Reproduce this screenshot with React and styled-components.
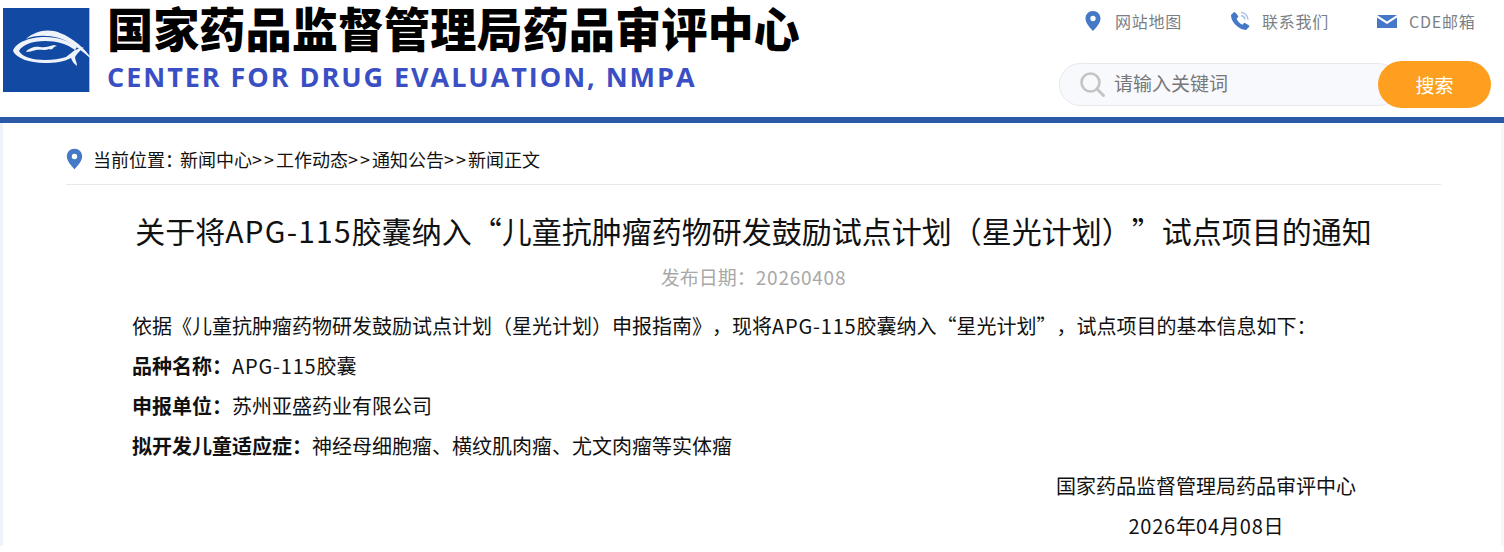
import React from "react";
import styled, { createGlobalStyle } from "styled-components";

const Global = createGlobalStyle`
  html, body { margin: 0; padding: 0; background: #fff; }
  body { font-family: "Noto Sans CJK SC", "Liberation Sans", sans-serif; color: #111; overflow: hidden; text-spacing-trim: space-all; font-kerning: none; }
  * { box-sizing: border-box; }
`;

const Page = styled.div`width: 1504px; height: 552px; overflow: hidden; background: #fff;`;

const Header = styled.header`
  height: 123px;
  border-bottom: 6px solid #2b59a5;
  padding: 8px 13px 0 3px;
  display: flex;
  justify-content: space-between;
`;
const Brand = styled.div`display: flex; gap: 14px; align-items: flex-start;`;
const BrandText = styled.div`display: flex; flex-direction: column; margin-top: -4px;`;
const BrandCn = styled.div`
  font-size: 46.2px; font-weight: 900; line-height: 46px; color: #000; white-space: nowrap;
`;
const BrandEn = styled.div`
  margin-top: 11px; font-family: "Open Sans", sans-serif; font-size: 27px; font-weight: 700; line-height: 32px;
  letter-spacing: 1.95px; color: #3a4fc4; white-space: nowrap;
`;

const Tools = styled.div`width: 432px; display: flex; flex-direction: column;`;
const NavRow = styled.nav`
  display: flex; gap: 48px; padding: 1px 0 0 24px; height: 53px; align-items: flex-start;
`;
const NavItem = styled.a`
  display: flex; align-items: center; gap: 12px; height: 24px; font-size: 16px; letter-spacing: 0.75px;
  color: #7a7f86; white-space: nowrap;
`;
const NavIcon = styled.svg`width: 20px; height: 20px; flex: none; margin-top: 0;`;

const Search = styled.form`display: flex; align-items: center; height: 47px; margin: 0;`;
const SearchField = styled.div`
  flex: 1; height: 43px; margin-right: -22px; border: 1px solid #e6e8ec; border-radius: 22px;
  background: #f8f9fc; display: flex; align-items: center; gap: 8px; padding: 0 0 4px 19px;
  font-size: 19px; color: #777; white-space: nowrap;
`;
const SearchBtn = styled.button`
  position: relative; width: 113px; height: 47px; border: 0; border-radius: 24px; background: #ff9f1f;
  color: #fff; font: 400 19px "Noto Sans CJK SC", sans-serif; padding-top: 0;
`;

const Main = styled.main`
  margin: 0 3px; padding: 0 60px 0 63px;
  box-shadow: -3px 0 0 #eef3fb, 3px 0 0 #f4f7fc;
`;
const Crumbs = styled.div`
  height: 62px; border-bottom: 1px solid #e8e8e8; display: flex; align-items: flex-start; gap: 10px;
  padding-top: 21px; font-size: 18px; line-height: 30px; color: #111; white-space: nowrap;
`;
const PinIcon = styled.svg`width: 17px; height: 22px; flex: none; margin-top: 4px;`;
const Arrows = styled.span`letter-spacing: 2px;`;
const Colon = styled.span`letter-spacing: -3px;`;

const Title = styled.h1`
  margin: 23px 0 0; font-size: 30px; font-weight: 400; line-height: 44px; text-align: center; white-space: nowrap;
  color: #111;
`;
const DateLine = styled.div`
  margin-top: 10px; font-size: 19px; line-height: 30px; text-align: center; color: #a8a8a8;
`;
const Latin = styled.span`letter-spacing: 0.04em;`;
const Body = styled.section`padding: 14px 0 0 66px; font-size: 20px; line-height: 40px; color: #111;`;
const Para = styled.p`margin: 0; white-space: nowrap;`;
const Strong = styled.b`font-weight: 700;`;
const Sign = styled.div`width: 300px; margin: 0 85px 0 auto; text-align: center; white-space: nowrap;`;

const Pin = ({ as: C = "svg", ...p }) => (
  <C viewBox="0 0 20 24" {...p}>
    <path d="M10 0C4.7 0 1 4 1 9c0 5.600 5.600 11.300 9 15 3.400-3.700 9-9.400 9-15 0-5-3.700-9-9-9z" fill="#4678c8" />
    <circle cx="10" cy="9" r="3.200" fill="#fff" />
  </C>
);

const Logo = () => (
  <svg width="90" height="84" viewBox="0 0 90 84" style={{ flex: "none", display: "block" }}>
    <defs>
      <filter id="soft" x="-10%" y="-10%" width="120%" height="120%">
        <feGaussianBlur stdDeviation="0.6" />
      </filter>
    </defs>
    <rect width="86" height="84" fill="#124aa3" />
    <rect x="86" width="1" height="84" fill="#a9bfe0" />
    <g fill="#eef3fb" filter="url(#soft)">
      <path d="M23 31C32 23 45 20 57 25 70 30 82 40 90 53 80 43 68 34 56 30 44 27 32 27 23 31z" />
      <g transform="translate(3 -6)">
        <path d="M7 49c3-9 17-14 32-14 13 0 24 4 32 10l-2 3c-8-6-18-9-30-9-13 0-23 4-26 10 3 6 14 9 26 9 8 0 15-1 21-3l9-7 9-3c-3 3-7 6-9 10 0 3 2 5 2 9-3-2-5-5-6-8-7 4-16 5-26 5-16 0-29-5-32-12z" />
        <path d="M20 50c2-4 10-6 14-5 6 1 9-1 14-2l3 1-3 1c-1 2-3 3-5 2-5 2-8 0-13 1-4 1-7 2-10 2z" />
      </g>
    </g>
  </svg>
);

export default function App() {
  return (
    <Page lang="zh-CN">
      <Global />
      <Header>
        <Brand>
          <Logo />
          <BrandText>
            <BrandCn>国家药品监督管理局药品审评中心</BrandCn>
            <BrandEn>CENTER FOR DRUG EVALUATION, NMPA</BrandEn>
          </BrandText>
        </Brand>
        <Tools>
          <NavRow>
            <NavItem>
              <Pin as={NavIcon} />
              网站地图
            </NavItem>
            <NavItem>
              <NavIcon viewBox="0 0 20 20">
                <path d="M3.500 1.500 1 4c-.5 6 7.500 15 15 15l3-3c.5-.7.300-1.300-.3-1.700l-3.300-2c-.7-.4-1.300-.3-1.800.2l-1.200 1.300c-2.300-1-5-3.800-5.800-6l1.200-1.200c.6-.6.600-1.200.2-1.800L5.300 1.600c-.5-.6-1.200-.6-1.800-.1z" fill="#4678c8" />
                <path d="M11 1.500c3.700.3 6.700 3 7 7M11 4.500c2 .2 3.600 1.800 3.900 3.800" fill="none" stroke="#a9c0e6" strokeWidth="1.600" />
              </NavIcon>
              联系我们
            </NavItem>
            <NavItem>
              <NavIcon viewBox="0 0 20 20">
                <path d="M0 4h20L10 10.500z" fill="#4678c8" />
                <path d="M0 6.500 10 13l10-6.500V17H0z" fill="#4678c8" />
              </NavIcon>
              CDE邮箱
            </NavItem>
          </NavRow>
          <Search onSubmit={(e) => e.preventDefault()}>
            <SearchField>
              <svg width="27" height="27" viewBox="0 0 27 27" style={{ flex: "none", marginTop: 3 }}>
                <circle cx="11.500" cy="11.500" r="9" fill="none" stroke="#c4c4c4" strokeWidth="2.600" />
                <path d="m18.500 18.500 6 6" stroke="#c4c4c4" strokeWidth="3" strokeLinecap="round" />
              </svg>
              请输入关键词
            </SearchField>
            <SearchBtn type="button">搜索</SearchBtn>
          </Search>
        </Tools>
      </Header>
      <Main>
        <Crumbs>
          <Pin as={PinIcon} />
          <span>
            当前位置<Colon>：</Colon>新闻中心<Arrows>&gt;&gt;</Arrows>工作动态<Arrows>&gt;&gt;</Arrows>通知公告<Arrows>&gt;&gt;</Arrows>新闻正文
          </span>
        </Crumbs>
        <Title>关于将<Latin>APG-115</Latin>胶囊纳入“儿童抗肿瘤药物研发鼓励试点计划（星光计划）”试点项目的通知</Title>
        <DateLine>发布日期：<Latin>20260408</Latin></DateLine>
        <Body>
          <Para>依据《儿童抗肿瘤药物研发鼓励试点计划（星光计划）申报指南》，现将<Latin>APG-115</Latin>胶囊纳入“星光计划”，试点项目的基本信息如下：</Para>
          <Para><Strong>品种名称：</Strong><Latin>APG-115</Latin>胶囊</Para>
          <Para><Strong>申报单位：</Strong>苏州亚盛药业有限公司</Para>
          <Para><Strong>拟开发儿童适应症：</Strong>神经母细胞瘤、横纹肌肉瘤、尤文肉瘤等实体瘤</Para>
          <Sign>国家药品监督管理局药品审评中心</Sign>
          <Sign><Latin>2026</Latin>年<Latin>04</Latin>月<Latin>08</Latin>日</Sign>
        </Body>
      </Main>
    </Page>
  );
}
